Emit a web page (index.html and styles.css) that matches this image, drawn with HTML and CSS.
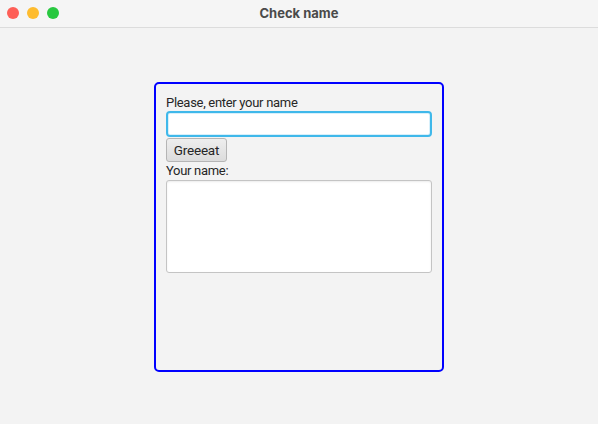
FILE: index.html
```html
<!DOCTYPE html>
<html>
<head>
<meta charset="utf-8">
<link rel="stylesheet" href="styles.css">
</head>
<body>
<div class="window">
  <div class="titlebar">
    <div class="lights">
      <span class="light red"></span>
      <span class="light yellow"></span>
      <span class="light green"></span>
    </div>
    <div class="title">Check name</div>
  </div>
  <div class="content">
    <div class="panel">
      <div class="label">Please, enter your name</div>
      <input class="field" type="text">
      <button class="btn">Greeeat</button>
      <div class="label label2">Your name:</div>
      <textarea class="area"></textarea>
    </div>
  </div>
</div>
</body>
</html>
```
FILE: styles.css
```css
html, body {
  margin: 0;
  padding: 0;
  width: 598px;
  height: 424px;
  overflow: hidden;
  background: #f3f3f3;
  font-family: Roboto, "Liberation Sans", sans-serif;
}
.window {
  width: 598px;
  height: 424px;
  display: flex;
  flex-direction: column;
}
.titlebar {
  height: 27px;
  border-bottom: 1px solid #dcdcdc;
  background: #f5f5f5;
  position: relative;
  display: flex;
  align-items: center;
  justify-content: center;
  flex-shrink: 0;
}
.lights {
  position: absolute;
  left: 7px;
  top: 7px;
  display: flex;
  gap: 8px;
}
.light {
  width: 12px;
  height: 12px;
  border-radius: 50%;
  display: block;
}
.red { background: #fe5f57; }
.yellow { background: #febc2e; }
.green { background: #28c840; }
.title {
  font-family: Inter, "Liberation Sans", sans-serif;
  font-size: 13px;
  font-weight: 700;
  color: #4a4a4a;
  padding-bottom: 2px;
}
.content {
  flex: 1;
  padding: 54px 0 0 154px;
}
.panel {
  box-sizing: border-box;
  width: 290px;
  height: 290px;
  border: 2px solid #0000ff;
  border-radius: 5px;
  padding: 11px 9px 0 10px;
  display: flex;
  flex-direction: column;
  align-items: flex-start;
}
.label {
  font-size: 13px;
  letter-spacing: -0.3px;
  color: #262626;
  height: 16px;
  line-height: 16px;
}
.label2 {
  height: 18px;
  line-height: 17px;
}
.field {
  box-sizing: border-box;
  width: 266px;
  height: 26px;
  margin: 0;
  border: 2px solid #3fb8ea;
  border-radius: 4px;
  background: #fff;
  outline: none;
  box-shadow: inset 0 0 0 1px #d7f0fb;
}
.btn {
  box-sizing: border-box;
  margin-top: 1px;
  height: 24px;
  width: 61px;
  padding: 0;
  font-family: inherit;
  font-size: 13.5px;
  letter-spacing: -0.2px;
  color: #262626;
  border: 1px solid #b5b5b5;
  border-radius: 3px;
  background: linear-gradient(#eeeeee, #dcdcdc);
}
.area {
  box-sizing: border-box;
  width: 266px;
  height: 93px;
  margin: 0;
  border: 1px solid #c4c4c4;
  border-radius: 3px;
  background: #fff;
  resize: none;
  box-shadow: inset 0 1px 2px rgba(0,0,0,0.08);
}
```
